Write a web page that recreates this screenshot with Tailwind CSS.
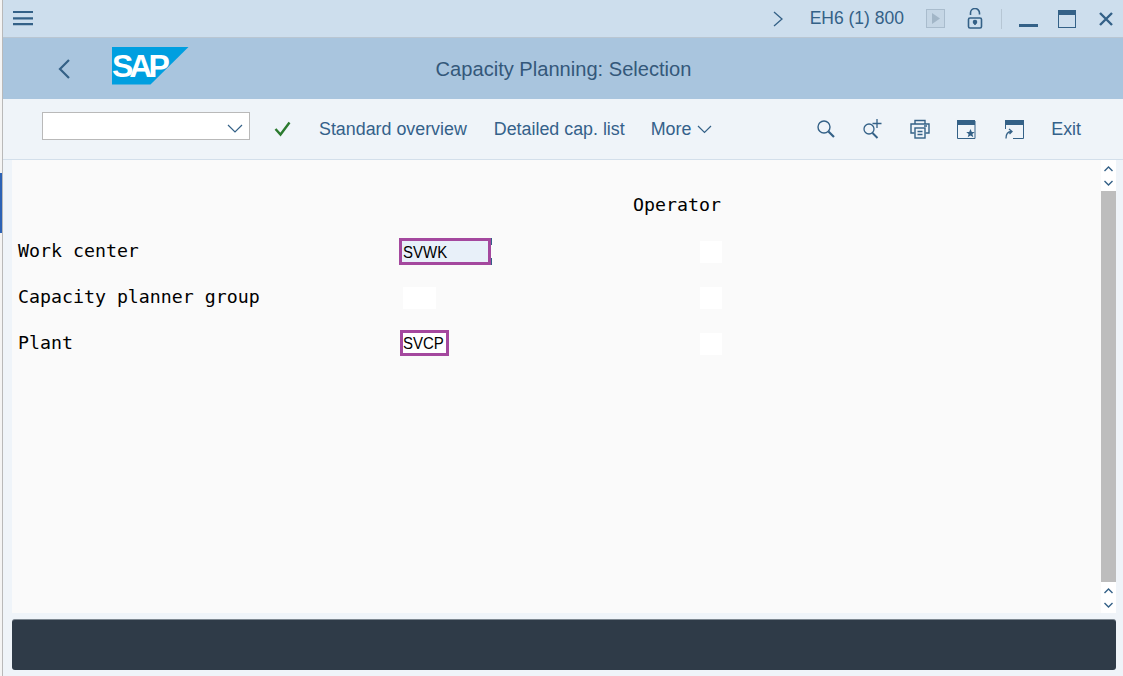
<!DOCTYPE html>
<html lang="en">
<head>
    <title>Capacity Planning: Selection</title>
    <meta charset="utf-8">
    <script src="https://cdn.jsdelivr.net/npm/@tailwindcss/browser@4"></script>
</head>
<body class="w-[1123px] h-[676px] overflow-hidden flex bg-[#f4f4f4] font-['Liberation_Sans',sans-serif]">
<!-- left edge -->
<div class="w-[3px] h-full flex flex-col border-r border-[#b9b9b9]">
    <div class="h-[173px]"></div>
    <div class="h-[60px] bg-[#2b62b5]"></div>
</div>
<div class="flex-1 flex flex-col min-w-0">
    <!-- window bar -->
    <div class="h-[38px] flex items-center bg-[#cddeed] border-b border-[#b9c6d2] text-[#346187] pr-[9px]">
        <svg class="ml-[10px]" width="22" height="20" viewBox="0 0 22 20" fill="none" stroke="#346187" stroke-width="2.200"><path d="M0 3h20M0 9.300h20M0 15.200h20"/></svg>
        <div class="flex-1"></div>
        <svg width="12" height="18" viewBox="0 0 12 18" fill="none" stroke="#346187" stroke-width="1.300"><path d="M2 2l8 7-8 7"/></svg>
        <span class="ml-[26px] text-[17.500px] leading-none">EH6 (1) 800</span>
        <svg class="ml-[22px]" width="20" height="20" viewBox="0 0 20 20"><rect x=".5" y=".5" width="18" height="18" fill="#c5d6e5" stroke="#a9bccd"/><path d="M6 4l8 5.500-8 5.500z" fill="#a2b6c7"/></svg>
        <svg class="ml-[21px]" width="18" height="22" viewBox="0 0 18 22" fill="none" stroke="#346187" stroke-width="1.600"><path d="M3.500 7V5a4.500 4.500 0 0 1 9 0v1.500"/><rect x="1.500" y="10" width="13" height="10" rx="1.500"/><circle cx="8" cy="14" r="1.500" fill="#346187"/><path d="M8 14v3"/></svg>
        <div class="ml-[16px] w-px h-[20px] bg-[#b6c6d4]"></div>
        <div class="ml-[17px] w-[19px] h-[3px] bg-[#346187] self-end mb-[10px]"></div>
        <div class="ml-[20px] w-[18px] h-[18px] border border-[#346187] border-t-[5px]"></div>
        <svg class="ml-[22px]" width="16" height="16" viewBox="0 0 16 16" fill="none" stroke="#346187" stroke-width="2.400"><path d="M2 2l12 12M14 2L2 14"/></svg>
    </div>
    <!-- title bar -->
    <div class="h-[61px] flex items-center bg-[#a9c5de] relative">
        <svg class="ml-[54px]" width="14" height="22" viewBox="0 0 14 22" fill="none" stroke="#346187" stroke-width="2.200"><path d="M12 2L3 11l9 9"/></svg>
        <div class="ml-[41px] mb-[6px] w-[77px] h-[38px] bg-[#009fe0] [clip-path:polygon(0_0,100%_0,50%_100%,0_100%)] text-white font-bold text-[32px] leading-[38px] tracking-[-4px]">SAP</div>
        <div class="absolute inset-x-0 pt-[2px] pl-px text-center text-[20.100px] text-[#34587a]">Capacity Planning: Selection</div>
    </div>
    <!-- toolbar -->
    <div class="h-[61px] flex items-center bg-[#eff4f9] border-b border-[#d3dfeb] text-[17.850px] text-[#34618a] pr-[42px]">
        <div class="ml-[39px] -mt-[6px] w-[208px] h-[28px] bg-white border border-[#b9b9b9] flex items-center justify-end pr-[6px]">
            <svg class="mt-[5px]" width="16" height="10" viewBox="0 0 16 10" fill="none" stroke="#346187" stroke-width="1.200"><path d="M1 1l7 7 7-7"/></svg>
        </div>
        <svg class="ml-[24px]" width="17" height="16" viewBox="0 0 17 16" fill="none" stroke="#2b7a2f" stroke-width="2.400"><path d="M1.500 8l5 5.500L15.500 1.500"/></svg>
        <span class="ml-[28px]">Standard overview</span>
        <span class="ml-[27px]">Detailed cap. list</span>
        <span class="ml-[26px]">More</span>
        <svg class="ml-[6px]" width="15" height="9" viewBox="0 0 15 9" fill="none" stroke="#346187" stroke-width="1.200"><path d="M1 1l6.500 6.500L14 1"/></svg>
        <div class="flex-1"></div>
        <svg width="20" height="20" viewBox="0 0 20 20" fill="none" stroke="#346187" stroke-width="1.400"><circle cx="8" cy="8" r="6"/><path d="M12.500 12.500l5.500 5.500" stroke-width="2.200"/></svg>
        <svg class="ml-[26px]" width="22" height="22" viewBox="0 0 22 22" fill="none" stroke="#346187" stroke-width="1.300"><circle cx="7" cy="11" r="5"/><path d="M10.500 15l5 5" stroke-width="2"/><path d="M15 1v9M10.500 5.500h9"/></svg>
        <svg class="ml-[26px]" width="20" height="20" viewBox="0 0 20 20" fill="none" stroke="#346187" stroke-width="1.400"><path d="M5 5V1.500h10V5"/><path d="M4.500 14H1V5h18v9h-3.500"/><rect x="5" y="9" width="10" height="10"/><path d="M7.500 12.500h5M7.500 15.500h5M14 7h3"/></svg>
        <svg class="ml-[27px]" width="19" height="19" viewBox="0 0 19 19"><path d="M.5 1h17.500v17.500H.5z" fill="none" stroke="#346187"/><rect width="18" height="5" fill="#346187"/><path d="M13.500 9l1.300 3h3l-2.400 2 .9 3.200-2.800-1.800-2.800 1.800.9-3.200-2.400-2h3z" fill="#346187"/></svg>
        <svg class="ml-[29px]" width="19" height="19" viewBox="0 0 19 19" fill="none" stroke="#346187"><path d="M.5 9V1h18v17.500H8"/><rect width="19" height="5" fill="#346187" stroke="none"/><path d="M1 18.500c0-5 1.500-7 5.500-7M4 9l3 2.500L4.500 14" stroke-width="1.300"/></svg>
        <span class="ml-[27px]">Exit</span>
    </div>
    <!-- main -->
    <div class="flex-1 flex flex-col bg-[#eff4f9] pl-[9px] pr-[7px]">
        <div class="h-[453px] flex">
            <div class="flex-1 bg-[#fafafa] pl-[6px] pt-[33px] font-['DejaVu_Sans_Mono',monospace] text-[18.250px] leading-[24px] text-black">
                <div class="h-[24px] pl-[615px]">Operator</div>
                <div class="mt-[22px] h-[24px] flex items-center">
                    <span class="w-[381px]">Work center</span>
                    <div class="relative mt-px w-[92px] h-[27px] border-[3px] border-[#a4489e] bg-[#e8f0f9] font-['Liberation_Sans',sans-serif] text-[15px] leading-[21px] pl-px">
                        <span class="inline-block scale-y-[1.15]">SVWK</span>
                        <div class="absolute -right-[4px] -top-[3px] w-px h-[27px] flex flex-col justify-between">
                            <div class="h-[7px] bg-[#346187]"></div>
                            <div class="h-[7px] bg-[#346187]"></div>
                        </div>
                    </div>
                    <div class="ml-[209px] mt-[2px] w-[22px] h-[22px] bg-white"></div>
                </div>
                <div class="mt-[22px] h-[24px] flex items-center">
                    <span class="w-[385px]">Capacity planner group</span>
                    <div class="mt-[2px] w-[33px] h-[22px] bg-white"></div>
                    <div class="ml-[264px] mt-[2px] w-[22px] h-[22px] bg-white"></div>
                </div>
                <div class="mt-[22px] h-[24px] flex items-center">
                    <span class="w-[382px]">Plant</span>
                    <div class="w-[49px] h-[26px] border-[3px] border-[#a4489e] bg-white font-['Liberation_Sans',sans-serif] text-[15px] leading-[20px]">
                        <span class="inline-block scale-y-[1.15]">SVCP</span>
                    </div>
                    <div class="ml-[251px] mt-[2px] w-[22px] h-[22px] bg-white"></div>
                </div>
            </div>
            <!-- scrollbar -->
            <div class="w-[15px] flex flex-col bg-white">
                <div class="h-[31px] flex flex-col items-center justify-center gap-[8px]">
                    <svg width="9" height="6" viewBox="0 0 9 6" fill="none" stroke="#346187" stroke-width="1.400"><path d="M.5 5l4-4 4 4"/></svg>
                    <svg width="9" height="6" viewBox="0 0 9 6" fill="none" stroke="#346187" stroke-width="1.400"><path d="M.5 1l4 4 4-4"/></svg>
                </div>
                <div class="flex-1 bg-[#bdbdbd]"></div>
                <div class="h-[31px] flex flex-col items-center justify-center gap-[8px]">
                    <svg width="9" height="6" viewBox="0 0 9 6" fill="none" stroke="#346187" stroke-width="1.400"><path d="M.5 5l4-4 4 4"/></svg>
                    <svg width="9" height="6" viewBox="0 0 9 6" fill="none" stroke="#346187" stroke-width="1.400"><path d="M.5 1l4 4 4-4"/></svg>
                </div>
            </div>
        </div>
        <!-- status bar -->
        <div class="mt-[6px] h-[51px] bg-[#2f3b48] rounded-[3px] border-t border-[#7d8790]"></div>
    </div>
</div>
</body>
</html>
